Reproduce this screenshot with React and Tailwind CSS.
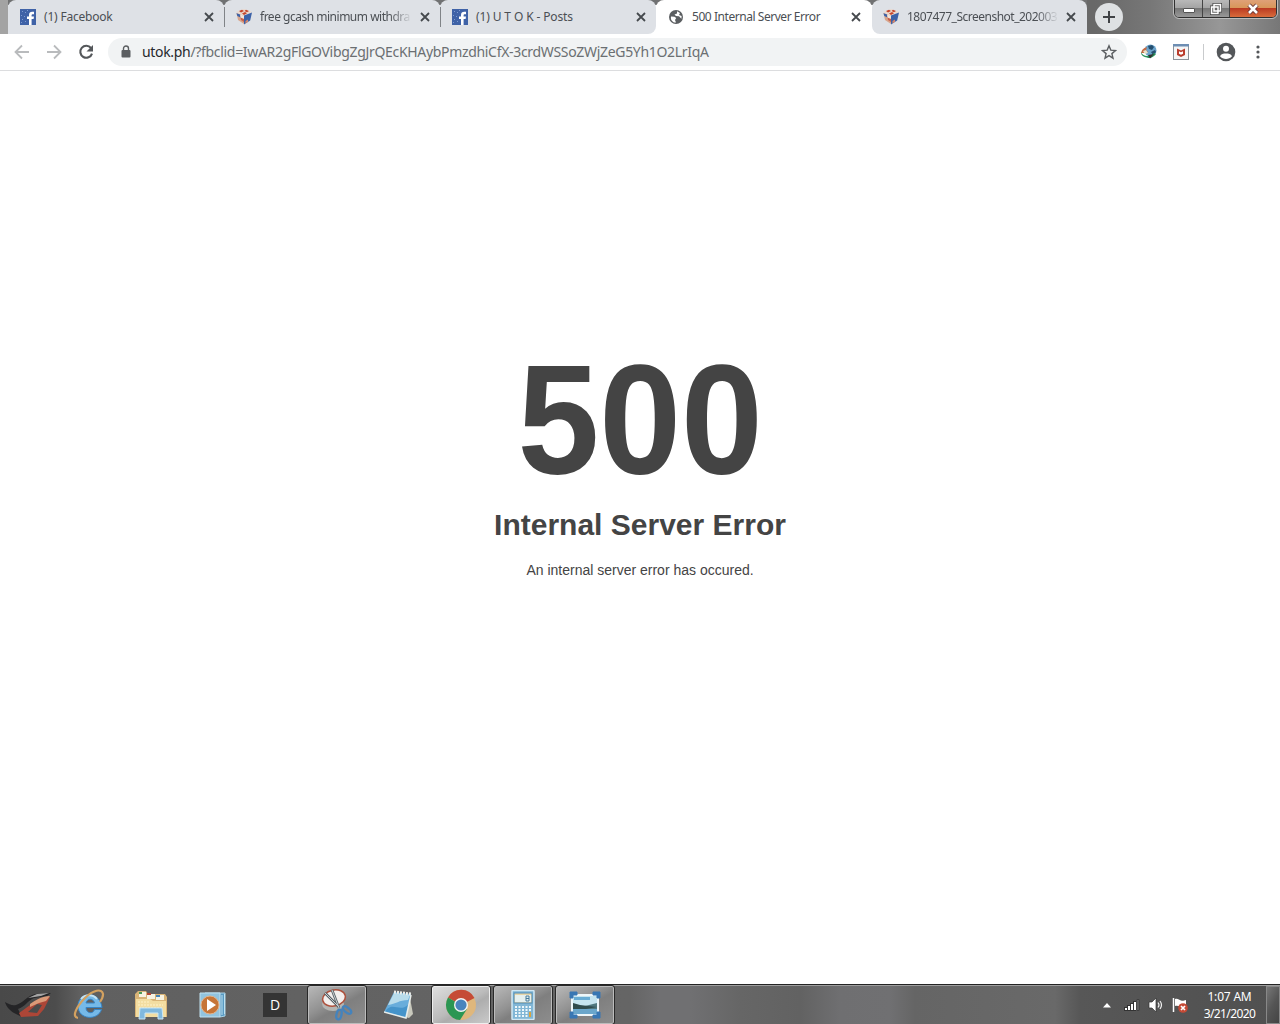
import React from 'react'

const tabs = [
    { title: '(1) Facebook', icon: 'fb', spacing: 'tracking-[-0.2px]' },
    { title: 'free gcash minimum withdra', icon: 'cube', spacing: 'tracking-[-0.49px]', fade: true },
    { title: '(1) U T O K - Posts', icon: 'fb', spacing: 'tracking-[-0.12px]' },
    { title: '500 Internal Server Error', icon: 'globe', spacing: 'tracking-[-0.45px]', active: true },
    { title: '1807477_Screenshot_202003', icon: 'cube', spacing: 'tracking-[-0.5px]', fade: true },
]

function Favicon({ name }) {
    if (name === 'fb') {
        return (
            <svg width="16" height="16" viewBox="0 0 16 16" className="shrink-0">
                <rect width="16" height="16" fill="#3f62a7" />
                <path d="M2 2h1v1H2zM5 3h1v1H5zM1 6h1v1H1zM4 7h1v1H4zM2 10h1v1H2zM5 12h1v1H5zM1 13h1v1H1zM7 1h1v1H7z" fill="#7f9bd0" />
                <path d="M9 16V10H7V7.500h2V6c0-2.200 1.200-3.200 3.200-3.200H14V5.200h-1.200c-.8 0-1.200.4-1.200 1.100v1.200H14l-.4 2.500h-2V16z" fill="#fff" />
            </svg>
        )
    }
    if (name === 'cube') {
        return (
            <svg width="16" height="16" viewBox="0 0 16 16" className="shrink-0">
                <path d="M0.500 4L8 6.500V15L2 11z" fill="#d8a58c" />
                <path d="M0 3l8-3 8 3-8 3.500z" fill="#ecd9cc" />
                <path d="M3 2l3-1.200L8 2 5 3.500zM10 .8L13 2l-2 1.300L8.500 2zM6 4.500L9 3l2 1.300-3 1.700z" fill="#c5452c" />
                <path d="M8 6.500L16 3.500l-1.800 8L8 15.500z" fill="#3c62a8" />
                <path d="M.5 4.200L4 5.400l.5 3L1.300 7z" fill="#3c62a8" />
                <path d="M4.500 8.500L8 10v3l-3-2z" fill="#c9614a" />
                <path d="M4.200 5.500L8 6.800v3L4.600 8.400z" fill="#f2e5dc" />
                <path d="M9.500 12l2.500-1.600v2.300L9.500 14.400z" fill="#d9886a" />
            </svg>
        )
    }
    return (
        <svg width="16" height="16" viewBox="0 0 16 16" className="shrink-0">
            <circle cx="8" cy="8" r="7" fill="#5b5e61" />
            <path d="M3 7.500l3.500.2L8.200 9 7 11l1 2.600C4.800 13.800 2.300 11 3 7.500zM9 2.200l3 1.800-1 2 2.600 1-.2 2.800-2.400-2.500-3-.3L6.500 5.500 9 4.500z" fill="#fff" />
        </svg>
    )
}

function CloseIcon() {
    return (
        <svg width="16" height="16" viewBox="0 0 16 16" className="shrink-0">
            <path d="M4 4l8 8M12 4l-8 8" stroke="#45494d" strokeWidth="1.800" />
        </svg>
    )
}

function tabClass(tab, last) {
    if (tab.active) return 'relative z-10 flex h-[34px] w-[216px] shrink-0 items-center rounded-t-[8px] bg-white pr-2 pl-3'
    if (last) return 'relative flex h-[34px] w-[215px] shrink-0 items-center rounded-t-[8px] rounded-bl-[8px] bg-[#dee1e6] pr-2 pl-[11px]'
    return 'relative flex h-[34px] w-[216px] shrink-0 items-center rounded-t-[8px] bg-[#dee1e6] pr-[7px] pl-3'
}

function Tab({ tab, last, next }) {
    return (
        <div className={tabClass(tab, last)}>
            <Favicon name={tab.icon} />
            <div className={tab.fade
                ? 'ml-2 h-[18px] w-[152px] text-xs leading-[18px] whitespace-nowrap text-[#4b4f54] [mask-image:linear-gradient(to_right,black_85%,transparent)]'
                : 'ml-2 h-[18px] w-[150px] text-xs leading-[18px] whitespace-nowrap text-[#4b4f54]'}>
                <span className={tab.spacing}>{tab.title}</span>
            </div>
            <div className="ml-auto flex"><CloseIcon /></div>
            {!last && !tab.active && !next.active && (
                <div className="absolute top-[7px] right-[-1px] z-20 h-5 w-px bg-[#808387]" />
            )}
        </div>
    )
}

function TabStrip() {
    return (
        <div className="flex h-[34px] bg-[linear-gradient(to_right,#a3a3a3_0,#a3a3a3_8px,#686868_20px,#686868_1095px,#777_1150px,#979797_1220px,#777_100%)]">
            <div className="w-2 shrink-0" />
            <div className="flex w-[1079px] shrink-0 bg-[linear-gradient(to_right,#dee1e6_0,#dee1e6_640px,#fff_640px,#fff_960px,transparent_960px)]">
                <div className="flex w-full bg-[linear-gradient(#707172_0,#707172_5px,transparent_5px)]">
                    {tabs.map((tab, i) => (
                        <div key={i} className={i === 2 ? 'flex [&>div]:rounded-br-[8px]' : 'flex'}>
                            <Tab tab={tab} next={tabs[i + 1]} last={i === tabs.length - 1} />
                        </div>
                    ))}
                </div>
            </div>
            <div className="mt-[3px] ml-2 flex size-7 shrink-0 items-center justify-center rounded-full bg-[#dee1e3]">
                <svg width="14" height="14" viewBox="0 0 14 14"><path d="M7 1v12M1 7h12" stroke="#404346" strokeWidth="2" /></svg>
            </div>
            <div className="ml-[51px] flex h-[18px] w-[103px] shrink-0 overflow-hidden rounded-b-[5px] border border-t-0 border-[#303030] outline outline-[#bcbcbc]">
                <div className="flex w-[28px] items-end justify-center border-r border-[#444] bg-[linear-gradient(#b9b9b9_0,#a2a2a2_50%,#777_50%,#999)] pb-1">
                    <div className="h-[5px] w-3 rounded-[1px] border border-[#555] bg-white" />
                </div>
                <div className="flex w-[27px] items-center justify-center border-r border-[#444] bg-[linear-gradient(#b9b9b9_0,#a2a2a2_50%,#777_50%,#999)]">
                    <svg width="12" height="12" viewBox="0 0 12 12">
                        <path d="M4 1.500h6.500V8H4z" fill="#777" stroke="#444" strokeWidth="3" />
                        <path d="M1.500 4H8v6.500H1.500z" fill="#777" stroke="#444" strokeWidth="3" />
                        <path d="M4 1.500h6.500V8H4zM1.500 4H8v6.500H1.500z" fill="#666" stroke="#fff" strokeWidth="1.500" />
                    </svg>
                </div>
                <div className="flex flex-1 items-center justify-center bg-[linear-gradient(#dfa178_0,#d8975a_45%,#b93820_45%,#d96b3b)]">
                    <svg width="12" height="12" viewBox="0 0 12 12">
                        <path d="M2 2l8 8M10 2l-8 8" stroke="#633" strokeWidth="4.500" />
                        <path d="M2 2l8 8M10 2l-8 8" stroke="#fff" strokeWidth="2.600" />
                    </svg>
                </div>
            </div>
        </div>
    )
}

function Toolbar() {
    return (
        <div className="flex h-[37px] items-center border-b border-[#dcdddf] bg-white">
            <div className="ml-[14px] flex w-[94px] gap-4">
                <svg width="16" height="16" viewBox="0 0 16 16"><path d="M15 8H2M8 1.500L1.500 8 8 14.500" fill="none" stroke="#b9bbbd" strokeWidth="1.800" /></svg>
                <svg width="16" height="16" viewBox="0 0 16 16"><path d="M1 8h13M8 1.500L14.500 8 8 14.500" fill="none" stroke="#b9bbbd" strokeWidth="1.800" /></svg>
                <svg width="16" height="16" viewBox="0 0 16 16">
                    <path d="M13 4A6 6 0 1 0 14 9.600" fill="none" stroke="#54575a" strokeWidth="2.100" />
                    <path d="M15 1v6.500H8.500z" fill="#54575a" />
                </svg>
            </div>
            <div className="flex h-7 w-[1019px] items-center rounded-full bg-[#f1f3f4] pr-[10px] pl-[13px]">
                <svg width="10" height="14" viewBox="0 0 10 14">
                    <path d="M2.500 6V3.500a2.500 2.500 0 0 1 5 0V6" fill="none" stroke="#5b5e61" strokeWidth="1.400" />
                    <rect x="0.500" y="5" width="9" height="7.500" rx="1" fill="#5b5e61" />
                </svg>
                <div className="ml-[11px] text-[14px] leading-[20px] tracking-[-0.32px] whitespace-nowrap text-[#6b6f72]">
                    <span className="text-[#27292c]">utok.ph</span>/?fbclid=IwAR2gFlGOVibgZgJrQEcKHAybPmzdhiCfX-3crdWSSoZWjZeG5Yh1O2LrIqA
                </div>
                <svg width="16" height="16" viewBox="0 0 16 16" className="ml-auto">
                    <path d="M8 1.800l1.800 4.300 4.700.4-3.600 3.100L12 14.200 8 11.700l-4 2.500 1.100-4.600-3.600-3.100 4.700-.4z" fill="none" stroke="#5b5e61" strokeWidth="1.400" />
                </svg>
            </div>
            <svg width="18" height="16" viewBox="0 0 18 16" className="ml-[13px]">
                <ellipse cx="10.500" cy="6.500" rx="6" ry="6" fill="#6ba3cb" />
                <path d="M8 2l4-1 2 2-2 3-3-1zM11 8l4-2 1 2-3 3z" fill="#254f70" />
                <path d="M1 9c1-4 3-5 6-6L6 6l2 2-2 1z" fill="#c46a43" />
                <path d="M1 8c2 5 9 5 13 1l2 1c-2 3-6 5-9 3.500C4 13 1 12 1 8z" fill="#279259" />
                <path d="M3 7l3-1 2 3-3 1z" fill="#e9e4cb" />
                <path d="M8 11l6-1-4 4.500z" fill="#333" />
            </svg>
            <svg width="16" height="16" viewBox="0 0 16 16" className="ml-[15px]">
                <rect x="0.500" y="0.500" width="15" height="15" fill="#f6f6f6" stroke="#8b929a" />
                <path d="M0 0h16v2.500H0z" fill="#6d8eb3" />
                <path d="M4 4.500l4 2 4-2v6.500l-4 2-4-2z" fill="#b93c2d" />
                <path d="M6 7.200l2 1 2-1v2.600l-2 1-2-1z" fill="#fff" />
            </svg>
            <div className="ml-[14px] h-4 w-px bg-[#c9cbcd]" />
            <svg width="20" height="20" viewBox="0 0 20 20" className="ml-3">
                <circle cx="10" cy="10" r="9.300" fill="#54575a" />
                <circle cx="10" cy="6.700" r="3" fill="#fff" />
                <path d="M4 14.200c1-2.200 3.500-2.700 6-2.700s5 .5 6 2.700c-3 3.700-9 3.700-12 0z" fill="#fff" />
            </svg>
            <svg width="4" height="16" viewBox="0 0 4 16" className="ml-5">
                <circle cx="2" cy="3" r="1.600" fill="#54575a" />
                <circle cx="2" cy="8" r="1.600" fill="#54575a" />
                <circle cx="2" cy="13" r="1.600" fill="#54575a" />
            </svg>
        </div>
    )
}

function RogIcon() {
    return (
        <svg width="48" height="32" viewBox="0 0 48 32">
            <path d="M2 13c4 2 7 4 11 3 7-2 11-9 19-11l16-1-4 3-13 2c-7 3-9 9-16 11l4 8-8-4C8 22 3 18 2 13z" fill="#252527" />
            <path d="M25 9l9-4 12-1-8 3z" fill="#a5a5a5" />
            <path d="M16 24C25 18 33 10 47 8L41 20l-6 7-17 1zm9-1l9 1 5-8-5-1z" fill="#ad4637" fillRule="evenodd" />
            <path d="M27 15C33 11 39 7 47 7l-4 5-7 2-9 4z" fill="#dc9a78" />
        </svg>
    )
}

function IeIcon() {
    return (
        <svg width="32" height="32" viewBox="0 0 32 32">
            <path d="M28.500 20.500C25 32 5 31 5 17S27 1 29 18.500H13c0 6 7 7 8.500 2zM13 14h8.500c-1-5-7.500-5-8.500 0z" fill="#75b9e8" stroke="#3684c5" strokeWidth="1" />
            <path d="M8 10C12 5 20 5 24 10" fill="none" stroke="#c3e3f5" strokeWidth="2" />
            <path d="M5 29C-2 28 4 17 12 9S29-1 30 5c.3 3-1 5-3 8" fill="none" stroke="#d3a160" strokeWidth="2.200" />
        </svg>
    )
}

function ExplorerIcon() {
    return (
        <svg width="34" height="30" viewBox="0 0 34 30">
            <path d="M1 4l3-3h8l2 3h17l2 3v20H1z" fill="#d9b477" />
            <path d="M5 2h7v5H5zM13 4h8v5h-8zM22 5h8v5h-8z" fill="#f7f3e2" />
            <path d="M5 2h3v2H5z" fill="#4a9a55" /><path d="M13 3h4v2h-4z" fill="#b34436" /><path d="M22 5h4v2h-4z" fill="#4684b9" />
            <path d="M2 9h14l3 2h13v16H2z" fill="#f3dda1" />
            <path d="M4 12h12M4 15h25M5 18h23" stroke="#fff2c9" strokeDasharray="2 1" />
            <path d="M6 18h22l1 11h-5v-6H11v6H5z" fill="#81b9de" stroke="#c8e6f7" />
        </svg>
    )
}

function MediaIcon() {
    return (
        <svg width="28" height="28" viewBox="0 0 28 28">
            <path d="M6 2h20v23l-5 1z" fill="#5899c1" stroke="#a9d3e8" />
            <path d="M1 2h20v24H1z" fill="#91c4df" stroke="#c0e0ef" />
            <path d="M23 4v20M25.500 3v20" stroke="#bce1f2" />
            <circle cx="11" cy="14" r="9" fill="#c67537" stroke="#e3b48c" />
            <path d="M8 8l9 6-9 6z" fill="#fff" />
        </svg>
    )
}

function SnipIcon() {
    return (
        <svg width="32" height="32" viewBox="0 0 32 32">
            <ellipse cx="12" cy="15" rx="11" ry="7" fill="#b5b5b2" />
            <ellipse cx="13" cy="9" rx="11.500" ry="8" transform="rotate(-12 13 9)" fill="#f3efed" stroke="#ad513d" strokeWidth="1.500" />
            <path d="M4 4l14 14M11 1l7 18" stroke="#5a6267" strokeWidth="2.600" />
            <path d="M4 4l14 14M11 1l7 18" stroke="#c7cdcf" strokeWidth="1" />
            <ellipse cx="18" cy="25.500" rx="2.500" ry="5" transform="rotate(12 18 25.500)" fill="none" stroke="#4483bd" strokeWidth="2.300" />
            <ellipse cx="26" cy="21" rx="2.500" ry="5" transform="rotate(-50 26 21)" fill="none" stroke="#4483bd" strokeWidth="2.300" />
        </svg>
    )
}

function NotepadIcon() {
    return (
        <svg width="30" height="30" viewBox="0 0 30 30">
            <path d="M25 3l4 21-4 4-4-1z" fill="#c9c9bd" />
            <path d="M10 2l17 2-5 24L0 22z" fill="#68addb" />
            <path d="M10 3l16 2-2 5C15 10 12 14 4 15z" fill="#b8dceb" />
            <path d="M3 19C10 13 16 22 24 15l-3 12L1 22z" fill="#4594ca" />
            <path d="M10 2l17 2" stroke="#eceeea" strokeWidth="3" strokeDasharray="2 1" />
            <path d="M27 5l-5 23L0 22" fill="none" stroke="#e8edea" strokeWidth="1.500" />
        </svg>
    )
}

function ChromeIcon() {
    return (
        <svg width="32" height="32" viewBox="0 0 32 32">
            <circle cx="16" cy="16" r="15" fill="#dfb77c" />
            <path d="M16 16L3 8.500A15 15 0 0 1 29.500 9z" fill="#c54b36" />
            <path d="M16 16L3 8.500A15 15 0 0 0 15 31l7-11z" fill="#2b9653" />
            <circle cx="16" cy="16" r="7" fill="#f5f5f3" />
            <circle cx="16" cy="16" r="5.600" fill="#4984bd" />
        </svg>
    )
}

function CalcIcon() {
    return (
        <svg width="24" height="30" viewBox="0 0 24 30">
            <rect x="1" y="0.500" width="22" height="29" rx="1" fill="#81b6d5" stroke="#d0e7f3" strokeWidth="1.500" />
            <rect x="3" y="3" width="18" height="10" fill="#e8d6a8" stroke="#528cb5" />
            <rect x="4" y="5" width="16" height="7" fill="#e5f0ef" />
            <path d="M15 6h3v5h-3zM15 8.500h3" fill="none" stroke="#487c9c" />
            <path d="M4 17h16M4 20h16M4 23h16M4 26h16" stroke="#edf7fb" strokeWidth="2" strokeDasharray="2 1.500" />
            <path d="M18 22h2v5h-2z" fill="#d9a542" />
        </svg>
    )
}

function PictureIcon() {
    return (
        <svg width="32" height="28" viewBox="0 0 32 28">
            <path d="M3 4h26v20H3z" fill="#c6e4ef" stroke="#eef6f9" strokeWidth="2" />
            <path d="M4 18l24-6v6z" fill="#50777e" />
            <path d="M4 12l7 2 8 1 9 1-11 2H4z" fill="#304b4c" />
            <path d="M4 18h24v5H4z" fill="#6aa6cb" />
            <path d="M5 6h16v3H5z" fill="#69acd4" />
            <path d="M1 7V1h7v3H4v3zM24 1h7v6h-3V4h-4zM1 21v6h7v-3H4v-3zM24 27h7v-6h-3v3h-4z" fill="#3977b3" stroke="#3977b3" />
        </svg>
    )
}

const apps = [
    { icon: <RogIcon /> },
    { icon: <IeIcon /> },
    { icon: <ExplorerIcon /> },
    { icon: <MediaIcon /> },
    { icon: <div className="flex size-6 items-center justify-center bg-[#343434] font-['Open_Sans',sans-serif] text-[14px] leading-6 text-white">D</div> },
    { icon: <SnipIcon />, open: true },
    { icon: <NotepadIcon /> },
    { icon: <ChromeIcon />, open: true, front: true },
    { icon: <CalcIcon />, open: true },
    { icon: <PictureIcon />, open: true },
]

function appClass(app) {
    if (app.front) return 'flex h-[38px] w-[58px] shrink-0 items-center justify-center rounded-[2px] border border-[#eee] bg-[linear-gradient(150deg,#dedede,#bbb_50%,#adadad_60%,#c9c9c9)] outline outline-[#292929]'
    if (app.open) return 'flex h-[38px] w-[58px] shrink-0 items-center justify-center rounded-[2px] border border-[#bcbcbc] bg-[linear-gradient(150deg,#b7b7b7,#929292_40%,#7f7f7f_55%,#8d8d8d)] outline outline-[#292929]'
    return 'flex h-[38px] w-[58px] shrink-0 items-center justify-center'
}

function Taskbar() {
    return (
        <div className="flex h-10 overflow-hidden border-t border-[#242424] bg-[linear-gradient(to_right,#494949_0,#4c4c4c_55px,#606060_80px,#656565_630px,#707072_660px,#707072_690px,#666_740px,#626262_800px,#6f6f71_840px,#707072_890px,#656565_915px,#696969_1055px,#575757_1080px,#505050_1280px)]">
            <div className="flex w-full border-t border-[#9d9d9d]">
                <div className="ml-[-2px] flex gap-1">
                    {apps.map((app, i) => <div key={i} className={appClass(app)}>{app.icon}</div>)}
                </div>
                <div className="ml-auto flex items-center">
                    <svg width="8" height="5" viewBox="0 0 8 5" className="mr-[13px]"><path d="M0 4.500L4 0l4 4.500z" fill="#fff" /></svg>
                    <svg width="16" height="14" viewBox="0 0 16 14" className="mr-2">
                        <path d="M0 9h3v4H0zM3 7h3v6H3zM6 5h3v8H6zM9 3h3v10H9z" fill="#333" />
                        <path d="M1 10h2v2H1zM4 8h2v4H4zM7 6h2v6H7zM10 4h2v8h-2z" fill="#fff" />
                        <path d="M13 1.500h2v11h-2z" fill="#777" stroke="#333" strokeWidth=".7" />
                    </svg>
                    <svg width="16" height="16" viewBox="0 0 16 16" className="mr-2">
                        <path d="M1 5h3l4-4v14l-4-4H1z" fill="#fff" stroke="#333" strokeWidth=".7" />
                        <path d="M10 5.500q2 2.500 0 5M12 4q3 4 0 8" fill="none" stroke="#f1f1f1" strokeWidth="1.200" />
                    </svg>
                    <svg width="17" height="16" viewBox="0 0 17 16">
                        <path d="M1.500 1v14" stroke="#fff" strokeWidth="1.500" />
                        <path d="M3 2c3-1 4 1 6 1.500s3 0 5-.5v6c-4 2-7-1-11 0z" fill="#fff" />
                        <circle cx="11" cy="11" r="4.800" fill="#c54a36" />
                        <path d="M9 9l4 4M13 9l-4 4" stroke="#fff" strokeWidth="1.700" />
                    </svg>
                    <div className="flex w-[77px] flex-col items-center pl-1 text-xs leading-[17px] text-white">
                        <span className="tracking-[-0.2px]">1:07 AM</span>
                        <span className="tracking-[-0.6px]">3/21/2020</span>
                    </div>
                    <div className="h-[38px] w-[14px] border border-[#888] bg-[linear-gradient(120deg,#777,#555_50%,#444)]" />
                </div>
            </div>
        </div>
    )
}

function App() {
    return (
        <div className="flex h-[1024px] w-[1280px] flex-col overflow-hidden bg-white font-['Noto_Sans',sans-serif]">
            <TabStrip />
            <Toolbar />
            <main className="flex flex-1 flex-col items-center pt-[274px] font-['Liberation_Sans',sans-serif] text-[#444]">
                <h1 className="-translate-y-px scale-x-[0.98] scale-y-[1.035] text-[150px] leading-[150px] font-bold">500</h1>
                <h2 className="mt-[13px] text-[30px] leading-[34px] font-bold">Internal Server Error</h2>
                <p className="mt-5 text-sm leading-4">An internal server error has occured.</p>
            </main>
            <Taskbar />
        </div>
    )
}

export default App
